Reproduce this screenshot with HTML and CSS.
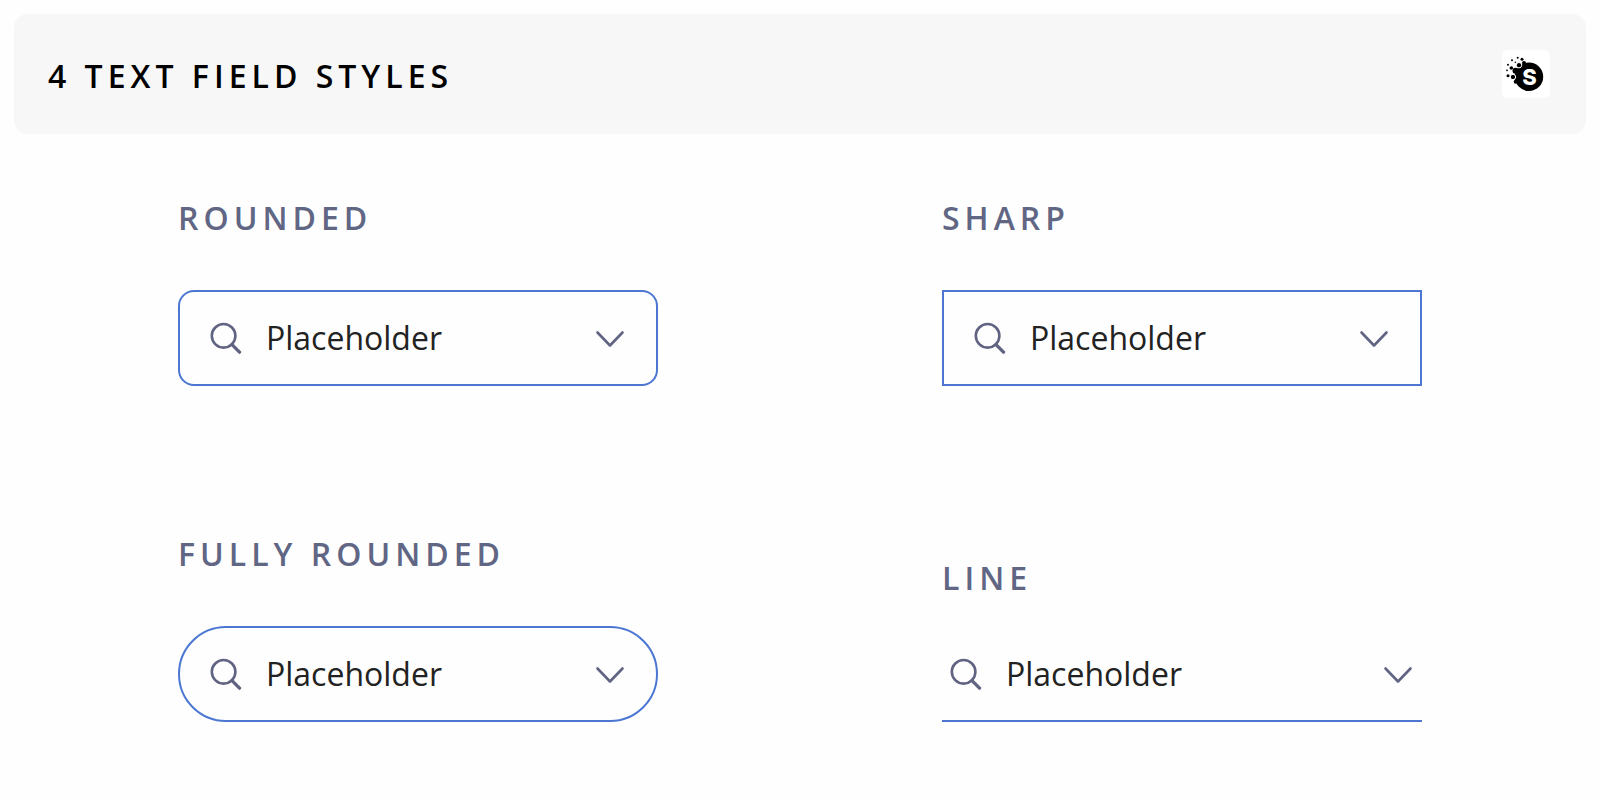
FILE: index.html
```
<!DOCTYPE html>
<html lang="en">
<head>
    <meta charset="UTF-8">
    <meta name="viewport" content="width=device-width, initial-scale=1">
    <title>4 Text Field Styles</title>
    <link rel="stylesheet" href="styles.css">
</head>
<body>
    <!-- shared icons -->
    <svg class="sprite" aria-hidden="true">
        <symbol id="icon-search" viewBox="0 0 32 32">
            <circle cx="13.6" cy="13.8" r="11.8" fill="none" stroke="currentColor" stroke-width="2.6"/>
            <path d="M22 22.6l7.5 7.5" fill="none" stroke="currentColor" stroke-width="3.4" stroke-linecap="round"/>
        </symbol>
        <symbol id="icon-chevron" viewBox="0 0 32 32">
            <path d="M3.5 10.5L16 23.5l12.5-13" fill="none" stroke="currentColor" stroke-width="2.6" stroke-linecap="round" stroke-linejoin="round"/>
        </symbol>
    </svg>

    <header class="header">
        <h1 class="title">4 TEXT FIELD STYLES</h1>
        <svg class="logo" viewBox="0 0 48 48" role="img" aria-label="S">
            <circle cx="27" cy="26.8" r="14.2"/>
            <circle cx="22" cy="13" r="2"/>
            <circle cx="13.5" cy="20.7" r="3"/>
            <circle cx="13.7" cy="31.8" r="2"/>
            <g class="logo-ring">
                <circle cx="17" cy="15.2" r="2.7"/>
                <circle cx="11" cy="27" r="2.7"/>
            </g>
            <circle cx="20" cy="9.3" r="1.5"/>
            <circle cx="15.7" cy="7.7" r="1"/>
            <circle cx="10" cy="10.3" r="1"/>
            <circle cx="13.3" cy="12.3" r="0.8"/>
            <circle cx="6" cy="14.7" r="1"/>
            <circle cx="9.3" cy="18" r="1.8"/>
            <circle cx="5" cy="20.3" r="0.9"/>
            <circle cx="6" cy="25.7" r="1.5"/>
            <text class="logo-letter" x="27.5" y="35" text-anchor="middle">S</text>
        </svg>
    </header>

    <main class="grid">
        <div class="item">
            <label class="label" for="rounded">ROUNDED</label>
            <div class="field rounded">
                <svg class="icon" aria-hidden="true"><use href="#icon-search"/></svg>
                <input class="input" id="rounded" type="text" placeholder="Placeholder">
                <button class="toggle" type="button" aria-label="Open"><svg class="icon"><use href="#icon-chevron"/></svg></button>
            </div>
        </div>
        <div class="item">
            <label class="label" for="sharp">SHARP</label>
            <div class="field">
                <svg class="icon" aria-hidden="true"><use href="#icon-search"/></svg>
                <input class="input" id="sharp" type="text" placeholder="Placeholder">
                <button class="toggle" type="button" aria-label="Open"><svg class="icon"><use href="#icon-chevron"/></svg></button>
            </div>
        </div>
        <div class="item">
            <label class="label" for="full">FULLY ROUNDED</label>
            <div class="field full">
                <svg class="icon" aria-hidden="true"><use href="#icon-search"/></svg>
                <input class="input" id="full" type="text" placeholder="Placeholder">
                <button class="toggle" type="button" aria-label="Open"><svg class="icon"><use href="#icon-chevron"/></svg></button>
            </div>
        </div>
        <div class="item">
            <label class="label" for="line">LINE</label>
            <div class="field line">
                <svg class="icon" aria-hidden="true"><use href="#icon-search"/></svg>
                <input class="input" id="line" type="text" placeholder="Placeholder">
                <button class="toggle" type="button" aria-label="Open"><svg class="icon"><use href="#icon-chevron"/></svg></button>
            </div>
        </div>
    </main>
</body>
</html>
```
FILE: styles.css
```
* {
    box-sizing: border-box;
}

body {
    margin: 0;
    padding: 14px;
    background: #fefefe;
    font-family: "Open Sans", "Noto Sans", sans-serif;
    font-size: 32px;
    line-height: 48px;
}

.sprite {
    display: none;
}

/* header */
.header {
    display: flex;
    justify-content: space-between;
    align-items: center;
    padding: 34px 36px 34px 34px;
    border-radius: 14px;
    background: #f7f7f7;
}

.title {
    margin: 0;
    padding-top: 4px;
    color: #000;
    font-size: 32px;
    font-weight: 600;
    letter-spacing: 5px;
}

.logo {
    flex: none;
    width: 48px;
    height: 48px;
    border-radius: 6px;
    background: #fff;
}

.logo-ring {
    stroke: #fff;
    stroke-width: 1px;
}

.logo-letter {
    fill: #fff;
    font-family: Inter, sans-serif;
    font-size: 22px;
    font-weight: 800;
}

/* two columns, fields line up on their bottom edge */
.grid {
    display: grid;
    grid-template-columns: repeat(2, minmax(0, 480px));
    justify-content: center;
    align-items: end;
    gap: 144px 284px;
    padding-top: 60px;
}

.label {
    display: block;
    margin-bottom: 48px;
    color: #606684;
    font-weight: 600;
    letter-spacing: 5px;
}

/* fields */
.field {
    display: flex;
    align-items: center;
    gap: 24px;
    padding: 22px 30px;
    border: 2px solid #4b77d3;
}

.rounded {
    border-radius: 16px;
}

.full {
    border-radius: 48px;
}

.line {
    padding: 0 8px 22px;
    border-width: 0 0 2px;
}

.input {
    flex: 1;
    min-width: 0;
    height: 48px;
    padding: 0;
    border: 0;
    outline: 0;
    background: none;
    color: #222;
    font: inherit;
}

.input::placeholder {
    color: #222;
    opacity: 1;
}

.icon {
    display: block;
    flex: none;
    width: 32px;
    height: 32px;
    color: #606482;
}

.toggle {
    padding: 0;
    border: 0;
    background: none;
    cursor: pointer;
}
```
